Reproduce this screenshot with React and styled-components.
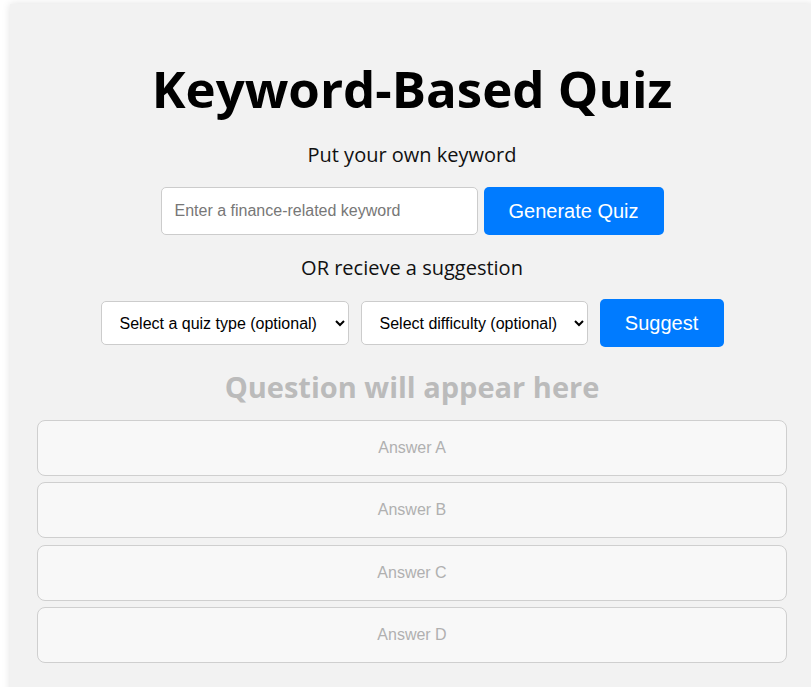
import styled, { createGlobalStyle } from "styled-components";

const GlobalStyle = createGlobalStyle`
  body {
    margin: 0;
    background: #fff;
    font-family: "Open Sans", sans-serif;
    overflow: hidden;
  }
`;

const Container = styled.div`
  width: 804px;
  margin: 4px 0 0 10px;
  padding: 50px 27px 40px;
  box-sizing: border-box;
  background: #f2f2f2;
  box-shadow: 0 0 8px rgba(0, 0, 0, 0.12);
  text-align: center;
  min-height: 700px;
`;

const Title = styled.h1`
  margin: 0;
  font-size: 51px;
  font-weight: 700;
  line-height: 68px;
  color: #000;
`;

const Label = styled.p`
  margin: ${(p) => p.top}px 0 0;
  font-size: 20px;
  line-height: 28px;
  color: #111;
`;

const Row = styled.div`
  display: flex;
  justify-content: center;
  align-items: center;
  gap: ${(p) => p.gap || 6}px;
  margin-top: ${(p) => p.top}px;
`;

const TextInput = styled.input`
  width: 317px;
  height: 48px;
  box-sizing: border-box;
  padding: 0 13px;
  border: 1px solid #ccc;
  border-radius: 5px;
  background: #fff;
  font-family: "Liberation Sans", Arial, sans-serif;
  font-size: 16px;
  &::placeholder {
    color: #777;
  }
`;

const Button = styled.button`
  width: ${(p) => p.w}px;
  height: 48px;
  border: none;
  border-radius: 5px;
  background: #007bff;
  color: #fff;
  font-family: "Liberation Sans", Arial, sans-serif;
  font-size: 20px;
  cursor: pointer;
`;

const Select = styled.select`
  width: ${(p) => p.w}px;
  height: 44px;
  box-sizing: border-box;
  padding: 0 6px 0 14px;
  border: 1px solid #ccc;
  border-radius: 5px;
  background: #fff;
  color: #000;
  font-family: "Liberation Sans", Arial, sans-serif;
  font-size: 16px;
`;

const Question = styled.h2`
  margin: 20px 0 13px;
  font-size: 29px;
  font-weight: 700;
  line-height: 40px;
  color: #bbb;
`;

const Answers = styled.div`
  display: flex;
  flex-direction: column;
  gap: 6.3px;
`;

const Answer = styled.div`
  height: 56px;
  box-sizing: border-box;
  display: flex;
  align-items: center;
  justify-content: center;
  border: 1px solid #cfcfcf;
  border-radius: 8px;
  background: #f8f8f8;
  color: #b0b0b0;
  font-family: "Liberation Sans", Arial, sans-serif;
  font-size: 16px;
`;

export default function App() {
  return (
    <>
      <GlobalStyle />
      <Container>
        <Title>Keyword-Based Quiz</Title>
        <Label top={19}>Put your own keyword</Label>
        <Row top={18}>
          <TextInput placeholder="Enter a finance-related keyword" />
          <Button w={180}>Generate Quiz</Button>
        </Row>
        <Label top={19}>OR recieve a suggestion</Label>
        <Row gap={12} top={17}>
          <Select w={248} defaultValue="">
            <option value="">Select a quiz type (optional)</option>
          </Select>
          <Select w={227} defaultValue="">
            <option value="">Select difficulty (optional)</option>
          </Select>
          <Button w={124}>Suggest</Button>
        </Row>
        <Question>Question will appear here</Question>
        <Answers>
          {["A", "B", "C", "D"].map((l) => (
            <Answer key={l}>Answer {l}</Answer>
          ))}
        </Answers>
      </Container>
    </>
  );
}
